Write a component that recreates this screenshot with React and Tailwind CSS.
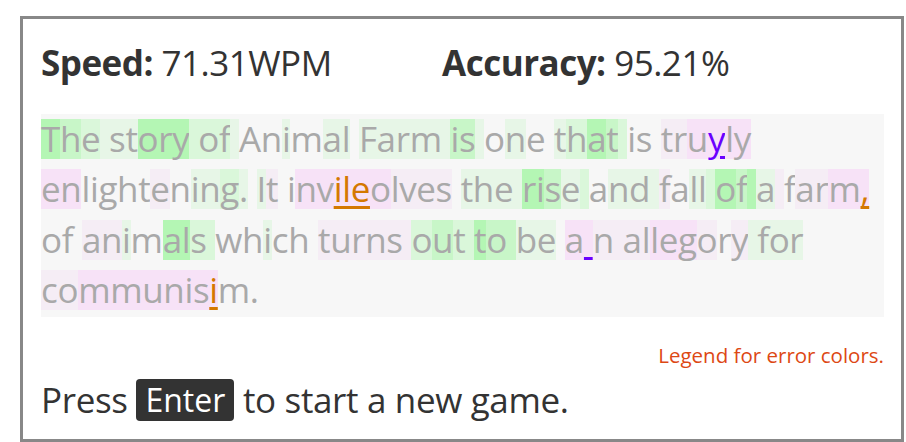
import React from "react";

const BG = {
  g3: "bg-[#b4f6b4]",
  g2: "bg-[#c8f6c8]",
  g1: "bg-[#daf7da]",
  g0: "bg-[#e7f6e7]",
  p1: "bg-[#f7e2f7]",
  p0: "bg-[#f5edf5]",
  n: "",
};

const ERR = {
  o: "text-[#d47800] underline decoration-[#d47800] decoration-[3px] underline-offset-[4px]",
  v: "text-[#6a00ff] underline decoration-[#6a00ff] decoration-[3px] underline-offset-[4px]",
};

// each line: [text, background, error?]
const lines = [
  [
    ["T", "g3"], ["h", "g2"], ["e", "g1"], [" st", "g0"], ["ory", "g3"], [" ", "g1"],
    ["of", "g1"], [" ", "g0"], ["An", "n"], ["i", "g0"], ["m", "n"], ["al", "g0"],
    [" ", "n"], ["Farm", "g0"], [" ", "g0"], ["is", "g2"], [" ", "g0"], ["o", "n"],
    ["n", "g0"], ["e ", "n"], ["t", "g0"], ["h", "g1"], ["a", "g3"], ["t", "g2"],
    [" ", "g1"], ["is ", "n"], ["tr", "p0"], ["u", "p1"], ["y", "p1", "v"], ["ly", "p1"],
  ],
  [
    ["en", "p1"], ["light", "n"], ["e", "p0"], ["n", "n"], ["in", "g0"], ["g", "g1"],
    [".", "g0"], [" ", "n"], ["I", "g0"], ["t", "p0"], [" i", "n"], ["nv", "p1"],
    ["ile", "p1", "o"], ["o", "p1"], ["lves", "p0"], [" ", "n"], ["the ", "g0"],
    ["ri", "g3"], ["s", "g2"], ["e", "g0"], [" ", "g1"], ["a", "n"], ["nd ", "g0"],
    ["f", "p0"], ["a", "n"], ["ll", "g0"], [" ", "g1"], ["o", "g3"], ["f", "g2"],
    [" ", "g3"], ["a", "g0"], [" ", "p0"], ["f", "n"], ["ar", "p0"], ["m", "p1"],
    [",", "p1", "o"],
  ],
  [
    ["of ", "n"], ["an", "p0"], ["i", "g0"], ["m", "n"], ["al", "g3"], ["s ", "g1"],
    ["wh", "n"], ["i", "g0"], ["ch ", "n"], ["turns ", "p0"], ["o", "g1"], ["u", "g2"],
    ["t ", "g1"], ["t", "g3"], ["o ", "g2"], ["be", "g0"], [" ", "n"], ["a", "p1"],
    [" ", "p1", "v"], ["n al", "p0"], ["leg", "p1"], ["o", "p0"], ["r", "n"],
    ["y", "p0"], [" for", "g0"],
  ],
  [["co", "p0"], ["mmunis", "p1"], ["i", "p1", "o"], ["m.", "n"]],
];

export default function App() {
  return (
    <div className="pl-[20px] pt-[16px] font-['Open_Sans',sans-serif]">
      <div className="w-[884px] h-[426px] border-[3px] border-[#888] pl-[18px] pr-[17px] pt-[24px]">
        <div className="flex h-[40px] items-center text-[35px] leading-[40px] tracking-[-0.5px] text-[#333]">
          <div className="w-[401px]">
            <span className="font-bold">Speed:</span> 71.31WPM
          </div>
          <div>
            <span className="font-bold">Accuracy:</span> 95.21%
          </div>
        </div>

        <div className="mt-[31px] flex flex-col gap-[10.33px] bg-[#f7f7f7] pt-[5px] pb-[7px] text-[35px] tracking-[-0.35px] text-[#a9a9a9]">
          {lines.map((line, i) => (
            <div key={i} className="flex h-[40px]">
              {line.map(([t, bg, err], j) => (
                <span
                  key={j}
                  className={`inline-block h-[40px] leading-[40px] whitespace-pre ${BG[bg]} ${err ? ERR[err] : ""}`}
                >
                  {t}
                </span>
              ))}
            </div>
          ))}
        </div>

        <div className="mt-[26px] text-right text-[20.5px] leading-[24px] text-[#dd4814]">
          Legend for error colors.
        </div>

        <div className="mt-[12px] flex h-[42px] items-center text-[35px] tracking-[-0.35px] text-[#333] whitespace-pre">
          <span>Press </span>
          <kbd className="flex h-[42px] items-center rounded-[4px] bg-[#333] px-[9px] font-['Open_Sans',sans-serif] text-[32px] tracking-normal text-white">
            Enter
          </kbd>
          <span> to start a new game.</span>
        </div>
      </div>
    </div>
  );
}
